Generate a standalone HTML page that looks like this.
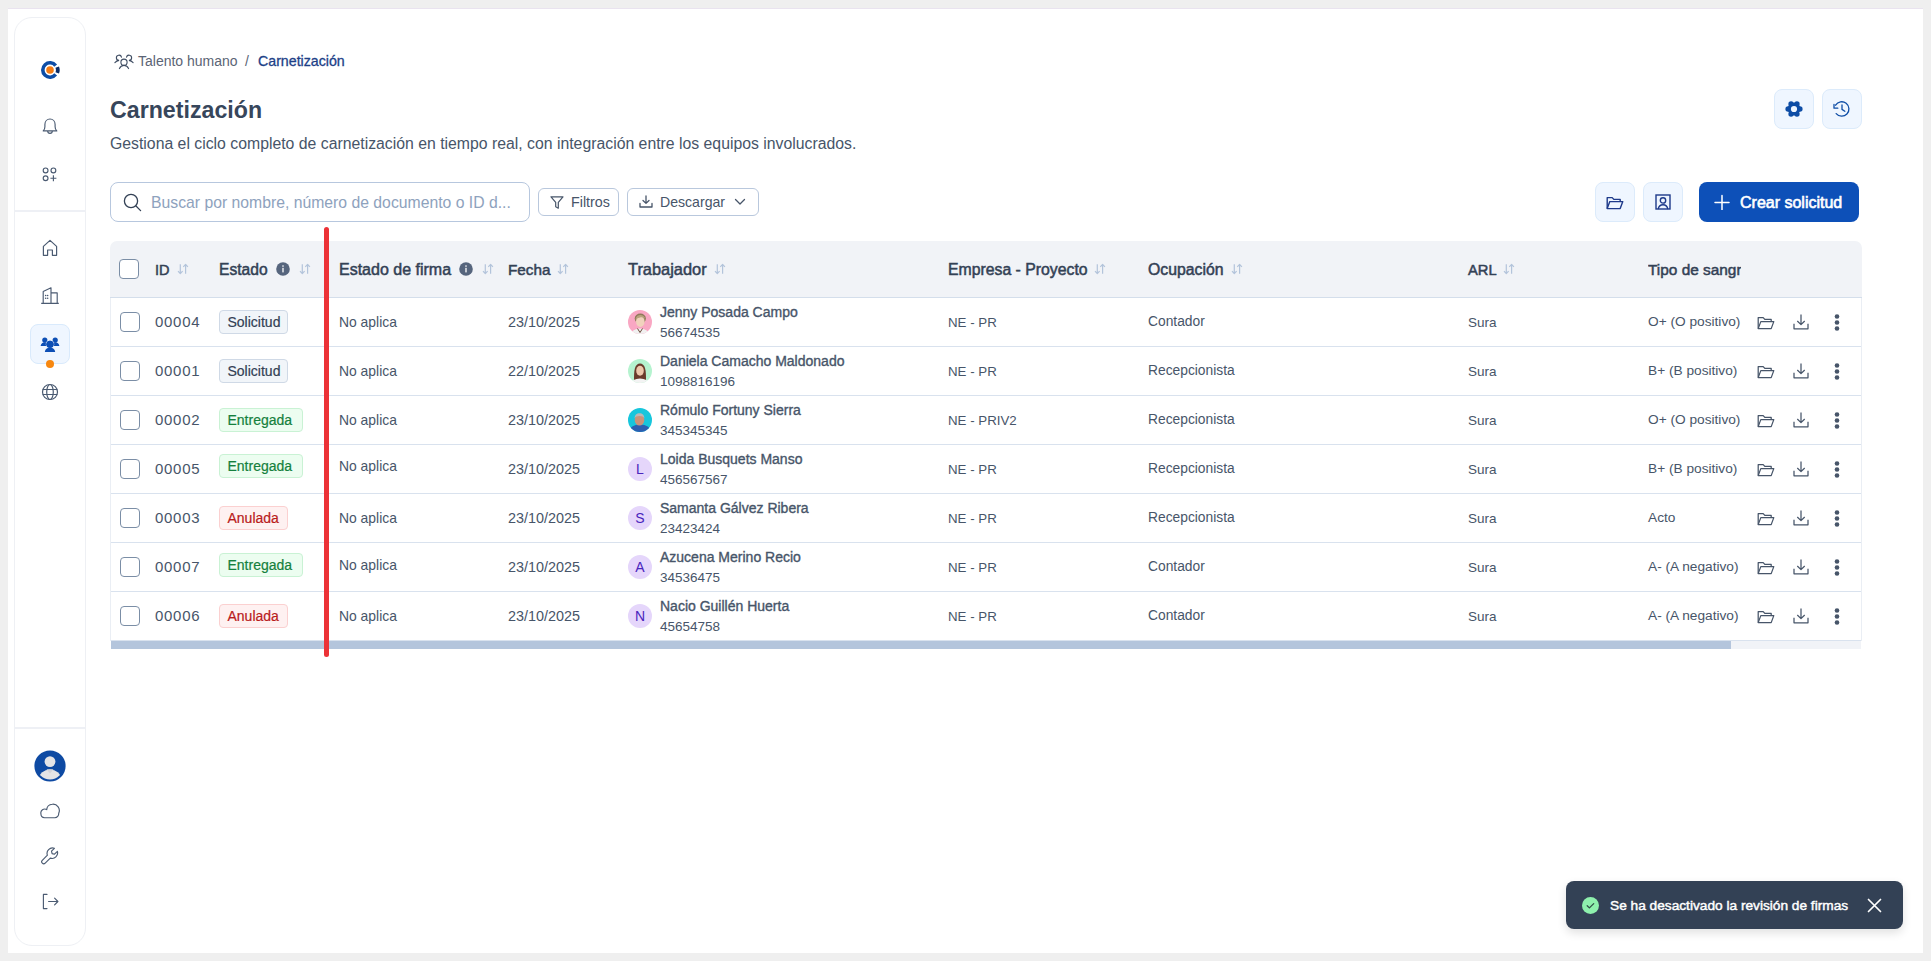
<!DOCTYPE html>
<html><head><meta charset="utf-8">
<style>
*{box-sizing:border-box;margin:0;padding:0}
html,body{width:1931px;height:961px;overflow:hidden;background:#efefef;font-family:"Liberation Sans",sans-serif;color:#475569}
#panel{position:absolute;left:8px;top:8px;width:1915px;height:945px;background:#fff;border-top:1px solid #e9e3ef}
#side{position:absolute;left:14px;top:17px;width:72px;height:929px;border:1px solid #eef0f4;border-radius:18px;background:#fff}
.sdiv{position:absolute;left:15px;width:70px;height:2px;background:#eef0f5}
.ic{position:absolute;display:block}
.t{position:absolute;white-space:nowrap;line-height:1}
.cb{position:absolute;width:20px;height:20px;border:1.3px solid #7b8ea6;border-radius:4px;background:#fff}
.av{position:absolute;width:24px;height:24px;border-radius:50%;background:#e5d6fb;color:#4a25bd;font-size:14px;line-height:25px;text-align:center}
.badge{position:absolute;height:24px;border:1px solid;border-radius:4px;font-size:14px;line-height:22px;padding-left:7.5px;white-space:nowrap;-webkit-text-stroke:0.2px currentColor}
.cell{position:absolute;white-space:nowrap;font-size:14px;line-height:1;color:#475569}
.nm{-webkit-text-stroke:0.35px #475569}
.hd{position:absolute;white-space:nowrap;font-size:15px;line-height:1;color:#334155;-webkit-text-stroke:0.5px #334155}
.ibtn{position:absolute;width:40px;height:40px;border-radius:8px;background:#eff6ff;border:1px solid #dcebfb}
.obtn{position:absolute;height:28px;border:1px solid #b9c8dd;border-radius:6px;background:#fff}
</style></head><body>
<div id="panel"></div>
<div id="side"></div>
<div class="sdiv" style="top:210px"></div>
<div class="sdiv" style="top:727px"></div>

<svg class="ic" style="left:40px;top:60px" width="20" height="20" viewBox="0 0 20 20">
 <path d="M15.67 5.57A7.2 7.2 0 1 0 15.67 14.43" fill="none" stroke="#0d4da6" stroke-width="3.6"/>
 <circle cx="10" cy="10" r="3.8" fill="#f47c14"/>
 <path d="M15.45 7.7L19 6.4A9.6 9.6 0 0 1 19 13.6L15.45 12.3A5.8 5.8 0 0 0 15.45 7.7Z" fill="#0b2c66"/>
</svg>
<svg class="ic" style="left:42px;top:118px" width="16" height="17" viewBox="0 0 16 17" fill="none" stroke="#4b5b72" stroke-width="1.15" stroke-linejoin="round"><path d="M1.2 12.9h13.6c-1.1-1-1.7-2.2-1.7-4.2V6.5C13.1 3.3 10.9 1 8 1S2.9 3.3 2.9 6.5v2.2c0 2-.6 3.2-1.7 4.2z"/><path d="M5.7 13.1a2.3 2.3 0 0 0 4.6 0"/></svg>
<svg class="ic" style="left:42px;top:167px" width="16" height="15" viewBox="0 0 16 15" fill="none" stroke="#4b5b72" stroke-width="1.15"><circle cx="3.6" cy="3.4" r="2.4"/><circle cx="11.4" cy="3.4" r="2.4"/><circle cx="3.6" cy="11.2" r="2.4"/><path d="M11.4 8.2v6M8.4 11.2h6"/></svg>
<svg class="ic" style="left:41px;top:239px" width="18" height="18" viewBox="0 0 18 18" fill="none" stroke="#4b5b72" stroke-width="1.2" stroke-linejoin="round"><path d="M2.4 16.3V7.4L9 1.4l6.6 6v8.9h-4.2v-5.3H6.6v5.3z"/></svg>
<svg class="ic" style="left:40px;top:287px" width="20" height="18" viewBox="0 0 20 18" fill="none" stroke="#4b5b72" stroke-width="1.15" stroke-linejoin="round"><path d="M1.2 16.4h17.6M3.2 16.4V4.4L11 .8v15.6M11 5.9h6.2v10.5"/><path d="M5.6 8.6h.1M7.6 8.6h.1M5.6 11.3h.1M7.6 11.3h.1" stroke-width="1.5" stroke-linecap="round"/></svg>
<div style="position:absolute;left:30px;top:324px;width:40px;height:40px;border-radius:8px;background:#eff6ff;border:1px solid #d9eafc"></div>
<svg class="ic" style="left:40px;top:336px" width="20" height="17" viewBox="0 0 20 17"><g fill="#0d4fb5"><circle cx="4.8" cy="4.1" r="2.6"/><path d="M0.6 10C.9 7.7 2.6 6.3 4.8 6.3S8.7 7.7 9 10z"/><circle cx="15.2" cy="4.1" r="2.6"/><path d="M11 10C11.3 7.7 13 6.3 15.2 6.3S19.1 7.7 19.4 10z"/></g><g fill="#0d4fb5" stroke="#eff6ff" stroke-width="1.3" paint-order="stroke"><circle cx="10" cy="8.3" r="3.6"/><path d="M4.8 15.9C5.1 12.9 7.3 11.4 10 11.4S14.9 12.9 15.2 15.9z"/></g><circle cx="10" cy="8.3" r="3.6" fill="#0d4fb5"/></svg>
<div style="position:absolute;left:46px;top:360px;width:8px;height:8px;border-radius:50%;background:#f7870f"></div>
<svg class="ic" style="left:41px;top:383px" width="18" height="18" viewBox="0 0 18 18" fill="none" stroke="#4b5b72" stroke-width="1.2"><circle cx="9" cy="9" r="7.5"/><ellipse cx="9" cy="9" rx="3.3" ry="7.5"/><path d="M1.7 6.5h14.6M1.7 11.5h14.6"/></svg>
<svg class="ic" style="left:34px;top:750px" width="32" height="32" viewBox="0 0 32 32"><defs><clipPath id="avc"><circle cx="16" cy="16" r="15.6"/></clipPath></defs><circle cx="16" cy="16" r="15.6" fill="#0e4aa3"/><g clip-path="url(#avc)"><clipPath id="avi"><circle cx="16" cy="16" r="13.4"/></clipPath><g clip-path="url(#avi)"><circle cx="16" cy="11.6" r="5.4" fill="#e4e4e6"/><ellipse cx="16" cy="29" rx="11" ry="9.5" fill="#e4e4e6"/></g><path d="M12.5 19.2l3.5 4.2 3.5-4.2z" fill="#d4d4d8"/></g></svg>
<svg class="ic" style="left:40px;top:803px" width="20" height="16" viewBox="0 0 20 16" fill="none" stroke="#4b5b72" stroke-width="1.15" stroke-linejoin="round"><path d="M4.6 14.7h10.2a4 4 0 0 0 3.9-4.4A6.4 6.4 0 0 0 12.3 1.2 6 6 0 0 0 6.7 6.6 3.9 3.9 0 0 0 .9 10.7a4 4 0 0 0 3.7 4z"/></svg>
<svg class="ic" style="left:41px;top:847px" width="18" height="18" viewBox="0 0 18 18" fill="none" stroke="#4b5b72" stroke-width="1.15" stroke-linejoin="round"><path d="M16.4 4.3l-2.9 2.9-2.4-.6-.6-2.4 2.9-2.9c-2-.7-4.3-.2-5.8 1.3-1.5 1.5-1.9 3.7-1.2 5.6L1.3 13.3c-.8.8-.8 2.1 0 2.9s2.1.8 2.9 0l5.1-5.1c1.9.7 4.1.3 5.6-1.2 1.5-1.5 2-3.8 1.5-5.6z"/></svg>
<svg class="ic" style="left:42px;top:893px" width="17" height="17" viewBox="0 0 17 17" fill="none" stroke="#4b5b72" stroke-width="1.15" stroke-linecap="round" stroke-linejoin="round"><path d="M5 1.4H1.4v14.2H5M6.6 8.5h9.2M12.6 5.2l3.3 3.3-3.3 3.3"/></svg>
<svg class="ic" style="left:110px;top:50px" width="30" height="22" viewBox="0 0 30 22" fill="none" stroke="#3f4d63" stroke-width="1.1" stroke-linecap="round"><circle cx="14" cy="12.2" r="3.1"/><path d="M9.4 18.6C10.3 16.5 12 15.4 14 15.4S17.7 16.5 18.6 18.6"/><path d="M11.5 7.2A2.6 2.6 0 1 0 9.1 10.4C7.4 10.7 5.9 11.5 4.9 12.6"/><path d="M16.5 7.2A2.6 2.6 0 1 1 18.9 10.4C20.6 10.7 22.1 11.5 23.1 12.6"/></svg>
<div class="t" style="left:138px;top:54px;font-size:14px;color:#5b6475">Talento humano</div>
<div class="t" style="left:245px;top:54px;font-size:14px;color:#5b6475">/</div>
<div class="t" style="left:258px;top:54px;font-size:14.2px;color:#1d3f87;-webkit-text-stroke:0.3px #1d3f87">Carnetización</div>
<div class="t" style="left:110px;top:99px;font-size:23.2px;font-weight:bold;color:#37465b">Carnetización</div>
<div class="t" style="left:110px;top:136px;font-size:15.8px;color:#475569">Gestiona el ciclo completo de carnetización en tiempo real, con integración entre los equipos involucrados.</div>
<div class="ibtn" style="left:1774px;top:89px"></div>
<svg class="ic" style="left:1785px;top:100px" width="18" height="18" viewBox="0 0 18 18"><g fill="#0e4da6"><circle cx="9" cy="9" r="6.4"/><circle cx="14.90" cy="9.00" r="2.7"/><circle cx="11.95" cy="14.11" r="2.7"/><circle cx="6.05" cy="14.11" r="2.7"/><circle cx="3.10" cy="9.00" r="2.7"/><circle cx="6.05" cy="3.89" r="2.7"/><circle cx="11.95" cy="3.89" r="2.7"/></g><circle cx="9" cy="9" r="3.1" fill="#eff6ff"/></svg>
<div class="ibtn" style="left:1822px;top:89px"></div>
<svg class="ic" style="left:1833px;top:100px" width="18" height="18" viewBox="0 0 18 18" fill="none" stroke="#0e4da6" stroke-width="1.3" stroke-linecap="round" stroke-linejoin="round"><path d="M2.6 5.2A7.2 7.2 0 1 1 3.2 13.6"/><path d="M1 4.4v3.8h3.8"/><path d="M9 5v4.4l2.8 1.9"/></svg>
<div style="position:absolute;left:110px;top:182px;width:420px;height:40px;border:1.3px solid #b7c7de;border-radius:8px;background:#fff"></div>
<svg class="ic" style="left:123px;top:193px" width="19" height="19" viewBox="0 0 19 19" fill="none" stroke="#334155" stroke-width="1.3" stroke-linecap="round"><circle cx="8" cy="8" r="6.6"/><path d="M13 13l4.6 4.6"/></svg>
<div class="t" style="left:151px;top:195px;font-size:15.75px;color:#8ea2bd">Buscar por nombre, número de documento o ID d...</div>
<div class="obtn" style="left:538px;top:188px;width:81px"></div>
<svg class="ic" style="left:550px;top:196px" width="14" height="13" viewBox="0 0 14 13" fill="none" stroke="#475569" stroke-width="1.2" stroke-linejoin="round"><path d="M1 .8h12L8.3 6.3v5.9L5.7 10.8V6.3z"/></svg>
<div class="t" style="left:571px;top:195px;font-size:14.3px;color:#475569">Filtros</div>
<div class="obtn" style="left:627px;top:188px;width:132px"></div>
<svg class="ic" style="left:639px;top:195px" width="14" height="13" viewBox="0 0 14 13" fill="none" stroke="#475569" stroke-width="1.3" stroke-linecap="round" stroke-linejoin="round"><path d="M7 1v7.3M4 5.5l3 2.9 3-2.9M1 8.5v3.5h12V8.5"/></svg>
<div class="t" style="left:660px;top:195px;font-size:14.1px;color:#475569">Descargar</div>
<svg class="ic" style="left:734px;top:198px" width="12" height="8" viewBox="0 0 12 8" fill="none" stroke="#475569" stroke-width="1.3" stroke-linecap="round" stroke-linejoin="round"><path d="M1.5 1.5L6 6l4.5-4.5"/></svg>
<div class="ibtn" style="left:1595px;top:182px"></div>
<svg class="ic" style="left:1606px;top:196px" width="18" height="14" viewBox="0 0 18 14" fill="none" stroke="#1e3a8a" stroke-width="1.4" stroke-linejoin="round"><path d="M1.2 12.6V1.6h5l1.6 1.8h6.4v2.2"/><path d="M1.2 12.6l2.6-7h13l-2.6 7z"/></svg>
<div class="ibtn" style="left:1643px;top:182px"></div>
<svg class="ic" style="left:1655px;top:194px" width="16" height="16" viewBox="0 0 16 16" fill="none" stroke="#1e3a8a" stroke-width="1.4"><rect x="1" y="1" width="14" height="14"/><circle cx="8" cy="6.4" r="2.7"/><path d="M3.2 15c.5-2.7 2.3-4.3 4.8-4.3s4.3 1.6 4.8 4.3"/></svg>
<div style="position:absolute;left:1699px;top:182px;width:160px;height:40px;border-radius:8px;background:#0d50b8"></div>
<svg class="ic" style="left:1714px;top:194px" width="16" height="16" viewBox="0 0 16 16" fill="none" stroke="#fff" stroke-width="1.5" stroke-linecap="round"><path d="M8 1.6v14M1 8.6h14"/></svg>
<div class="t" style="left:1740px;top:194.5px;font-size:16px;color:#fff;-webkit-text-stroke:0.6px #fff">Crear solicitud</div>
<div style="position:absolute;left:110px;top:241px;width:1752px;height:408px;border-radius:7px 7px 0 0;overflow:hidden">
<div style="position:absolute;left:0;top:0;width:1752px;height:57px;background:#f1f3f7;border-bottom:1px solid #d4deeb"></div>
<div style="position:absolute;left:0;top:57px;width:1px;height:343px;background:#eaeef4"></div>
<div style="position:absolute;left:1751px;top:57px;width:1px;height:343px;background:#eaeef4"></div>
<div style="position:absolute;left:1px;top:105px;width:1750px;height:1px;background:#d9e2ee"></div>
<div style="position:absolute;left:1px;top:154px;width:1750px;height:1px;background:#d9e2ee"></div>
<div style="position:absolute;left:1px;top:203px;width:1750px;height:1px;background:#d9e2ee"></div>
<div style="position:absolute;left:1px;top:252px;width:1750px;height:1px;background:#d9e2ee"></div>
<div style="position:absolute;left:1px;top:301px;width:1750px;height:1px;background:#d9e2ee"></div>
<div style="position:absolute;left:1px;top:350px;width:1750px;height:1px;background:#d9e2ee"></div>
<div style="position:absolute;left:1px;top:399px;width:1750px;height:1px;background:#d9e2ee"></div>
<div style="position:absolute;left:1px;top:400px;width:1750px;height:8px;background:#f1f3f7"></div>
<div style="position:absolute;left:1px;top:400px;width:1620px;height:8px;background:#b4c5dc"></div>
</div>
<div class="cb" style="left:119px;top:259px"></div>
<div class="hd" style="left:155px;top:262.93px;font-size:14.5px;">ID</div>
<svg class="ic" style="left:176.5px;top:263px" width="12" height="12" viewBox="0 0 12 12" fill="none" stroke="#b3c4db" stroke-width="1.2" stroke-linejoin="round"><path d="M3.3 1.2v9.2M1 8.1l2.3 2.5 2.3-2.5M8.6 10.8V1.6M6.3 3.9l2.3-2.5 2.3 2.5"/></svg>
<div class="hd" style="left:219px;top:261.99px;font-size:15.6px;">Estado</div>
<svg class="ic" style="left:276px;top:262px" width="14" height="14" viewBox="0 0 14 14"><circle cx="7" cy="7" r="6.8" fill="#56657d"/><circle cx="7" cy="4.1" r=".8" fill="#fff"/><rect x="6.35" y="5.7" width="1.3" height="4.7" rx=".4" fill="#fff"/></svg>
<svg class="ic" style="left:298.5px;top:263px" width="12" height="12" viewBox="0 0 12 12" fill="none" stroke="#b3c4db" stroke-width="1.2" stroke-linejoin="round"><path d="M3.3 1.2v9.2M1 8.1l2.3 2.5 2.3-2.5M8.6 10.8V1.6M6.3 3.9l2.3-2.5 2.3 2.5"/></svg>
<div class="hd" style="left:339px;top:261.66px;font-size:16px;">Estado de firma</div>
<svg class="ic" style="left:459px;top:262px" width="14" height="14" viewBox="0 0 14 14"><circle cx="7" cy="7" r="6.8" fill="#56657d"/><circle cx="7" cy="4.1" r=".8" fill="#fff"/><rect x="6.35" y="5.7" width="1.3" height="4.7" rx=".4" fill="#fff"/></svg>
<svg class="ic" style="left:481.5px;top:263px" width="12" height="12" viewBox="0 0 12 12" fill="none" stroke="#b3c4db" stroke-width="1.2" stroke-linejoin="round"><path d="M3.3 1.2v9.2M1 8.1l2.3 2.5 2.3-2.5M8.6 10.8V1.6M6.3 3.9l2.3-2.5 2.3 2.5"/></svg>
<div class="hd" style="left:508px;top:262.25px;font-size:15.3px;">Fecha</div>
<svg class="ic" style="left:556.5px;top:263px" width="12" height="12" viewBox="0 0 12 12" fill="none" stroke="#b3c4db" stroke-width="1.2" stroke-linejoin="round"><path d="M3.3 1.2v9.2M1 8.1l2.3 2.5 2.3-2.5M8.6 10.8V1.6M6.3 3.9l2.3-2.5 2.3 2.5"/></svg>
<div class="hd" style="left:628px;top:261.32px;font-size:16.4px;">Trabajador</div>
<svg class="ic" style="left:713.5px;top:263px" width="12" height="12" viewBox="0 0 12 12" fill="none" stroke="#b3c4db" stroke-width="1.2" stroke-linejoin="round"><path d="M3.3 1.2v9.2M1 8.1l2.3 2.5 2.3-2.5M8.6 10.8V1.6M6.3 3.9l2.3-2.5 2.3 2.5"/></svg>
<div class="hd" style="left:948px;top:261.83px;font-size:15.8px;">Empresa - Proyecto</div>
<svg class="ic" style="left:1093.5px;top:263px" width="12" height="12" viewBox="0 0 12 12" fill="none" stroke="#b3c4db" stroke-width="1.2" stroke-linejoin="round"><path d="M3.3 1.2v9.2M1 8.1l2.3 2.5 2.3-2.5M8.6 10.8V1.6M6.3 3.9l2.3-2.5 2.3 2.5"/></svg>
<div class="hd" style="left:1148px;top:261.83px;font-size:15.8px;">Ocupación</div>
<svg class="ic" style="left:1230.5px;top:263px" width="12" height="12" viewBox="0 0 12 12" fill="none" stroke="#b3c4db" stroke-width="1.2" stroke-linejoin="round"><path d="M3.3 1.2v9.2M1 8.1l2.3 2.5 2.3-2.5M8.6 10.8V1.6M6.3 3.9l2.3-2.5 2.3 2.5"/></svg>
<div class="hd" style="left:1468px;top:262.76px;font-size:14.7px;">ARL</div>
<svg class="ic" style="left:1502.5px;top:263px" width="12" height="12" viewBox="0 0 12 12" fill="none" stroke="#b3c4db" stroke-width="1.2" stroke-linejoin="round"><path d="M3.3 1.2v9.2M1 8.1l2.3 2.5 2.3-2.5M8.6 10.8V1.6M6.3 3.9l2.3-2.5 2.3 2.5"/></svg>
<div style="position:absolute;left:1648px;top:255px;width:92.5px;height:30px;overflow:hidden"><div class="hd" style="left:0px;top:-255px;margin-top:262.16px;font-size:15.4px;">Tipo de sangre</div></div>
<div class="cb" style="left:120px;top:312px"></div>
<div class="cell" style="left:155px;top:314.30px;font-size:15px;letter-spacing:0.7px">00004</div>
<div class="badge" style="left:219px;top:310px;width:69px;background:#f1f5f9;border-color:#cfd9e6;color:#334155">Solicitud</div>
<div class="cell" style="left:339px;top:315.73px;font-size:13.9px;">No aplica</div>
<div class="cell" style="left:508px;top:315.31px;font-size:14.4px;">23/10/2025</div>
<svg class="ic" style="left:628px;top:310px" width="24" height="24" viewBox="0 0 24 24"><defs><clipPath id="cimg1"><circle cx="12" cy="12" r="12"/></clipPath></defs><g clip-path="url(#cimg1)"><rect width="24" height="24" fill="#f9a7c3"/><ellipse cx="12" cy="25" rx="9.5" ry="6.5" fill="#f1f1f1"/><path d="M9.5 18.5l2.5 4 2.5-4" fill="none" stroke="#6b4b3a" stroke-width="1"/><ellipse cx="12.3" cy="8.6" rx="5.6" ry="5" fill="#8f7a5a"/><ellipse cx="12.3" cy="11.6" rx="4.3" ry="5.3" fill="#f1d2bd"/><path d="M7.4 9.5c.6-3.2 2.6-4.6 5-4.6s4.3 1.4 4.9 4.1c-1.6-1.4-3.4-1.9-5.3-1.5-1.6.4-3 1-4.6 2z" fill="#b9a27c"/></g></svg>
<div class="cell nm" style="left:660px;top:305.35px;font-size:14px;">Jenny Posada Campo</div>
<div class="cell" style="left:660px;top:325.57px;font-size:13.5px;">56674535</div>
<div class="cell" style="left:948px;top:315.74px;font-size:13.3px;">NE - PR</div>
<div class="cell" style="left:1148px;top:315.32px;font-size:13.8px;">Contador</div>
<div class="cell" style="left:1468px;top:315.57px;font-size:13.5px;">Sura</div>
<div class="cell" style="left:1648px;top:315.40px;font-size:13.7px;">O+ (O positivo)</div>
<svg class="ic" style="left:1757px;top:315.5px" width="18" height="14" viewBox="0 0 18 14" fill="none" stroke="#475569" stroke-width="1.25" stroke-linejoin="round"><path d="M1.2 12.6V1.6h5l1.6 1.8h6.4v2.2"/><path d="M1.2 12.6l2.6-7h13l-2.6 7z"/></svg>
<svg class="ic" style="left:1793px;top:314px" width="16" height="16" viewBox="0 0 16 16" fill="none" stroke="#475569" stroke-width="1.25" stroke-linejoin="round"><path d="M8 .5v10M4.3 7l3.7 3.6L11.7 7M1 9.8v5h14v-5"/></svg>
<svg class="ic" style="left:1834px;top:314px" width="6" height="17" viewBox="0 0 6 17" fill="#475569"><circle cx="3" cy="2.5" r="2.3"/><circle cx="3" cy="8.5" r="2.3"/><circle cx="3" cy="14.5" r="2.3"/></svg>
<div class="cb" style="left:120px;top:361px"></div>
<div class="cell" style="left:155px;top:363.30px;font-size:15px;letter-spacing:0.7px">00001</div>
<div class="badge" style="left:219px;top:359px;width:69px;background:#f1f5f9;border-color:#cfd9e6;color:#334155">Solicitud</div>
<div class="cell" style="left:339px;top:364.73px;font-size:13.9px;">No aplica</div>
<div class="cell" style="left:508px;top:364.31px;font-size:14.4px;">22/10/2025</div>
<svg class="ic" style="left:628px;top:359px" width="24" height="24" viewBox="0 0 24 24"><defs><clipPath id="cimg2"><circle cx="12" cy="12" r="12"/></clipPath></defs><g clip-path="url(#cimg2)"><rect width="24" height="24" fill="#b5f3cf"/><path d="M6 21c0-6 .2-9 1-12 .9-3 2.7-4.6 5-4.6s4.1 1.6 5 4.6c.8 3 1 6 1 12z" fill="#6a3b2b"/><ellipse cx="12" cy="25" rx="9" ry="5.5" fill="#f3f3f3"/><ellipse cx="12" cy="11.8" rx="3.8" ry="5" fill="#edc7aa"/></g></svg>
<div class="cell nm" style="left:660px;top:354.35px;font-size:14px;">Daniela Camacho Maldonado</div>
<div class="cell" style="left:660px;top:374.57px;font-size:13.5px;">1098816196</div>
<div class="cell" style="left:948px;top:364.74px;font-size:13.3px;">NE - PR</div>
<div class="cell" style="left:1148px;top:364.32px;font-size:13.8px;">Recepcionista</div>
<div class="cell" style="left:1468px;top:364.57px;font-size:13.5px;">Sura</div>
<div class="cell" style="left:1648px;top:364.40px;font-size:13.7px;">B+ (B positivo)</div>
<svg class="ic" style="left:1757px;top:364.5px" width="18" height="14" viewBox="0 0 18 14" fill="none" stroke="#475569" stroke-width="1.25" stroke-linejoin="round"><path d="M1.2 12.6V1.6h5l1.6 1.8h6.4v2.2"/><path d="M1.2 12.6l2.6-7h13l-2.6 7z"/></svg>
<svg class="ic" style="left:1793px;top:363px" width="16" height="16" viewBox="0 0 16 16" fill="none" stroke="#475569" stroke-width="1.25" stroke-linejoin="round"><path d="M8 .5v10M4.3 7l3.7 3.6L11.7 7M1 9.8v5h14v-5"/></svg>
<svg class="ic" style="left:1834px;top:363px" width="6" height="17" viewBox="0 0 6 17" fill="#475569"><circle cx="3" cy="2.5" r="2.3"/><circle cx="3" cy="8.5" r="2.3"/><circle cx="3" cy="14.5" r="2.3"/></svg>
<div class="cb" style="left:120px;top:410px"></div>
<div class="cell" style="left:155px;top:412.30px;font-size:15px;letter-spacing:0.7px">00002</div>
<div class="badge" style="left:219px;top:408px;width:84px;background:#ecfdf0;border-color:#c9f2d4;color:#15803d">Entregada</div>
<div class="cell" style="left:339px;top:413.73px;font-size:13.9px;">No aplica</div>
<div class="cell" style="left:508px;top:413.31px;font-size:14.4px;">23/10/2025</div>
<svg class="ic" style="left:628px;top:408px" width="24" height="24" viewBox="0 0 24 24"><defs><clipPath id="cimg3"><circle cx="12" cy="12" r="12"/></clipPath></defs><g clip-path="url(#cimg3)"><rect width="24" height="24" fill="#17c6dc"/><ellipse cx="12" cy="23.5" rx="11" ry="7" fill="#2b5fb0"/><ellipse cx="11.5" cy="12" rx="4.8" ry="5.6" fill="#c8937a"/><path d="M6.6 10.5c0-3.3 2.1-5.2 4.9-5.2s4.9 1.9 4.9 5.2c-.8-1.6-2.3-2.4-4.9-2.4s-4.1.8-4.9 2.4z" fill="#b8b8b8"/></g></svg>
<div class="cell nm" style="left:660px;top:403.35px;font-size:14px;">Rómulo Fortuny Sierra</div>
<div class="cell" style="left:660px;top:423.57px;font-size:13.5px;">345345345</div>
<div class="cell" style="left:948px;top:413.74px;font-size:13.3px;">NE - PRIV2</div>
<div class="cell" style="left:1148px;top:413.32px;font-size:13.8px;">Recepcionista</div>
<div class="cell" style="left:1468px;top:413.57px;font-size:13.5px;">Sura</div>
<div class="cell" style="left:1648px;top:413.40px;font-size:13.7px;">O+ (O positivo)</div>
<svg class="ic" style="left:1757px;top:413.5px" width="18" height="14" viewBox="0 0 18 14" fill="none" stroke="#475569" stroke-width="1.25" stroke-linejoin="round"><path d="M1.2 12.6V1.6h5l1.6 1.8h6.4v2.2"/><path d="M1.2 12.6l2.6-7h13l-2.6 7z"/></svg>
<svg class="ic" style="left:1793px;top:412px" width="16" height="16" viewBox="0 0 16 16" fill="none" stroke="#475569" stroke-width="1.25" stroke-linejoin="round"><path d="M8 .5v10M4.3 7l3.7 3.6L11.7 7M1 9.8v5h14v-5"/></svg>
<svg class="ic" style="left:1834px;top:412px" width="6" height="17" viewBox="0 0 6 17" fill="#475569"><circle cx="3" cy="2.5" r="2.3"/><circle cx="3" cy="8.5" r="2.3"/><circle cx="3" cy="14.5" r="2.3"/></svg>
<div class="cb" style="left:120px;top:459px"></div>
<div class="cell" style="left:155px;top:461.30px;font-size:15px;letter-spacing:0.7px">00005</div>
<div class="badge" style="left:219px;top:454px;width:84px;background:#ecfdf0;border-color:#c9f2d4;color:#15803d">Entregada</div>
<div class="cell" style="left:339px;top:459.73px;font-size:13.9px;">No aplica</div>
<div class="cell" style="left:508px;top:462.31px;font-size:14.4px;">23/10/2025</div>
<div class="av" style="left:628px;top:457px">L</div>
<div class="cell nm" style="left:660px;top:452.35px;font-size:14px;">Loida Busquets Manso</div>
<div class="cell" style="left:660px;top:472.57px;font-size:13.5px;">456567567</div>
<div class="cell" style="left:948px;top:462.74px;font-size:13.3px;">NE - PR</div>
<div class="cell" style="left:1148px;top:462.32px;font-size:13.8px;">Recepcionista</div>
<div class="cell" style="left:1468px;top:462.57px;font-size:13.5px;">Sura</div>
<div class="cell" style="left:1648px;top:462.40px;font-size:13.7px;">B+ (B positivo)</div>
<svg class="ic" style="left:1757px;top:462.5px" width="18" height="14" viewBox="0 0 18 14" fill="none" stroke="#475569" stroke-width="1.25" stroke-linejoin="round"><path d="M1.2 12.6V1.6h5l1.6 1.8h6.4v2.2"/><path d="M1.2 12.6l2.6-7h13l-2.6 7z"/></svg>
<svg class="ic" style="left:1793px;top:461px" width="16" height="16" viewBox="0 0 16 16" fill="none" stroke="#475569" stroke-width="1.25" stroke-linejoin="round"><path d="M8 .5v10M4.3 7l3.7 3.6L11.7 7M1 9.8v5h14v-5"/></svg>
<svg class="ic" style="left:1834px;top:461px" width="6" height="17" viewBox="0 0 6 17" fill="#475569"><circle cx="3" cy="2.5" r="2.3"/><circle cx="3" cy="8.5" r="2.3"/><circle cx="3" cy="14.5" r="2.3"/></svg>
<div class="cb" style="left:120px;top:508px"></div>
<div class="cell" style="left:155px;top:510.30px;font-size:15px;letter-spacing:0.7px">00003</div>
<div class="badge" style="left:219px;top:506px;width:69px;background:#fef1f1;border-color:#fbd0d0;color:#b91c1c">Anulada</div>
<div class="cell" style="left:339px;top:511.73px;font-size:13.9px;">No aplica</div>
<div class="cell" style="left:508px;top:511.31px;font-size:14.4px;">23/10/2025</div>
<div class="av" style="left:628px;top:506px">S</div>
<div class="cell nm" style="left:660px;top:501.35px;font-size:14px;">Samanta Gálvez Ribera</div>
<div class="cell" style="left:660px;top:521.57px;font-size:13.5px;">23423424</div>
<div class="cell" style="left:948px;top:511.74px;font-size:13.3px;">NE - PR</div>
<div class="cell" style="left:1148px;top:511.32px;font-size:13.8px;">Recepcionista</div>
<div class="cell" style="left:1468px;top:511.57px;font-size:13.5px;">Sura</div>
<div class="cell" style="left:1648px;top:511.40px;font-size:13.7px;">Acto</div>
<svg class="ic" style="left:1757px;top:511.5px" width="18" height="14" viewBox="0 0 18 14" fill="none" stroke="#475569" stroke-width="1.25" stroke-linejoin="round"><path d="M1.2 12.6V1.6h5l1.6 1.8h6.4v2.2"/><path d="M1.2 12.6l2.6-7h13l-2.6 7z"/></svg>
<svg class="ic" style="left:1793px;top:510px" width="16" height="16" viewBox="0 0 16 16" fill="none" stroke="#475569" stroke-width="1.25" stroke-linejoin="round"><path d="M8 .5v10M4.3 7l3.7 3.6L11.7 7M1 9.8v5h14v-5"/></svg>
<svg class="ic" style="left:1834px;top:510px" width="6" height="17" viewBox="0 0 6 17" fill="#475569"><circle cx="3" cy="2.5" r="2.3"/><circle cx="3" cy="8.5" r="2.3"/><circle cx="3" cy="14.5" r="2.3"/></svg>
<div class="cb" style="left:120px;top:557px"></div>
<div class="cell" style="left:155px;top:559.30px;font-size:15px;letter-spacing:0.7px">00007</div>
<div class="badge" style="left:219px;top:553px;width:84px;background:#ecfdf0;border-color:#c9f2d4;color:#15803d">Entregada</div>
<div class="cell" style="left:339px;top:558.73px;font-size:13.9px;">No aplica</div>
<div class="cell" style="left:508px;top:560.31px;font-size:14.4px;">23/10/2025</div>
<div class="av" style="left:628px;top:555px">A</div>
<div class="cell nm" style="left:660px;top:550.35px;font-size:14px;">Azucena Merino Recio</div>
<div class="cell" style="left:660px;top:570.57px;font-size:13.5px;">34536475</div>
<div class="cell" style="left:948px;top:560.74px;font-size:13.3px;">NE - PR</div>
<div class="cell" style="left:1148px;top:560.32px;font-size:13.8px;">Contador</div>
<div class="cell" style="left:1468px;top:560.57px;font-size:13.5px;">Sura</div>
<div class="cell" style="left:1648px;top:560.40px;font-size:13.7px;">A- (A negativo)</div>
<svg class="ic" style="left:1757px;top:560.5px" width="18" height="14" viewBox="0 0 18 14" fill="none" stroke="#475569" stroke-width="1.25" stroke-linejoin="round"><path d="M1.2 12.6V1.6h5l1.6 1.8h6.4v2.2"/><path d="M1.2 12.6l2.6-7h13l-2.6 7z"/></svg>
<svg class="ic" style="left:1793px;top:559px" width="16" height="16" viewBox="0 0 16 16" fill="none" stroke="#475569" stroke-width="1.25" stroke-linejoin="round"><path d="M8 .5v10M4.3 7l3.7 3.6L11.7 7M1 9.8v5h14v-5"/></svg>
<svg class="ic" style="left:1834px;top:559px" width="6" height="17" viewBox="0 0 6 17" fill="#475569"><circle cx="3" cy="2.5" r="2.3"/><circle cx="3" cy="8.5" r="2.3"/><circle cx="3" cy="14.5" r="2.3"/></svg>
<div class="cb" style="left:120px;top:606px"></div>
<div class="cell" style="left:155px;top:608.30px;font-size:15px;letter-spacing:0.7px">00006</div>
<div class="badge" style="left:219px;top:604px;width:69px;background:#fef1f1;border-color:#fbd0d0;color:#b91c1c">Anulada</div>
<div class="cell" style="left:339px;top:609.73px;font-size:13.9px;">No aplica</div>
<div class="cell" style="left:508px;top:609.31px;font-size:14.4px;">23/10/2025</div>
<div class="av" style="left:628px;top:604px">N</div>
<div class="cell nm" style="left:660px;top:599.35px;font-size:14px;">Nacio Guillén Huerta</div>
<div class="cell" style="left:660px;top:619.57px;font-size:13.5px;">45654758</div>
<div class="cell" style="left:948px;top:609.74px;font-size:13.3px;">NE - PR</div>
<div class="cell" style="left:1148px;top:609.32px;font-size:13.8px;">Contador</div>
<div class="cell" style="left:1468px;top:609.57px;font-size:13.5px;">Sura</div>
<div class="cell" style="left:1648px;top:609.40px;font-size:13.7px;">A- (A negativo)</div>
<svg class="ic" style="left:1757px;top:609.5px" width="18" height="14" viewBox="0 0 18 14" fill="none" stroke="#475569" stroke-width="1.25" stroke-linejoin="round"><path d="M1.2 12.6V1.6h5l1.6 1.8h6.4v2.2"/><path d="M1.2 12.6l2.6-7h13l-2.6 7z"/></svg>
<svg class="ic" style="left:1793px;top:608px" width="16" height="16" viewBox="0 0 16 16" fill="none" stroke="#475569" stroke-width="1.25" stroke-linejoin="round"><path d="M8 .5v10M4.3 7l3.7 3.6L11.7 7M1 9.8v5h14v-5"/></svg>
<svg class="ic" style="left:1834px;top:608px" width="6" height="17" viewBox="0 0 6 17" fill="#475569"><circle cx="3" cy="2.5" r="2.3"/><circle cx="3" cy="8.5" r="2.3"/><circle cx="3" cy="14.5" r="2.3"/></svg>
<div style="position:absolute;left:324px;top:227px;width:5px;height:430px;border-radius:3px;background:#ec3237"></div>
<div style="position:absolute;left:1566px;top:881px;width:337px;height:48px;border-radius:8px;background:#334155;box-shadow:0 4px 10px rgba(0,0,0,.12)"></div>
<svg class="ic" style="left:1582px;top:897px" width="17" height="17" viewBox="0 0 17 17"><circle cx="8.5" cy="8.5" r="8.5" fill="#8ef0ad"/><path d="M5.2 8.8l2.2 2.1 4.3-4.3" fill="none" stroke="#2f4f46" stroke-width="1.3" stroke-linecap="round" stroke-linejoin="round"/></svg>
<div class="t" style="left:1610px;top:899px;font-size:13.7px;color:#fff;-webkit-text-stroke:0.45px #fff">Se ha desactivado la revisión de firmas</div>
<svg class="ic" style="left:1867px;top:898px" width="15" height="15" viewBox="0 0 15 15" fill="none" stroke="#fff" stroke-width="1.7" stroke-linecap="round"><path d="M1.5 1.5l12 12M13.5 1.5l-12 12"/></svg>
</body></html>
